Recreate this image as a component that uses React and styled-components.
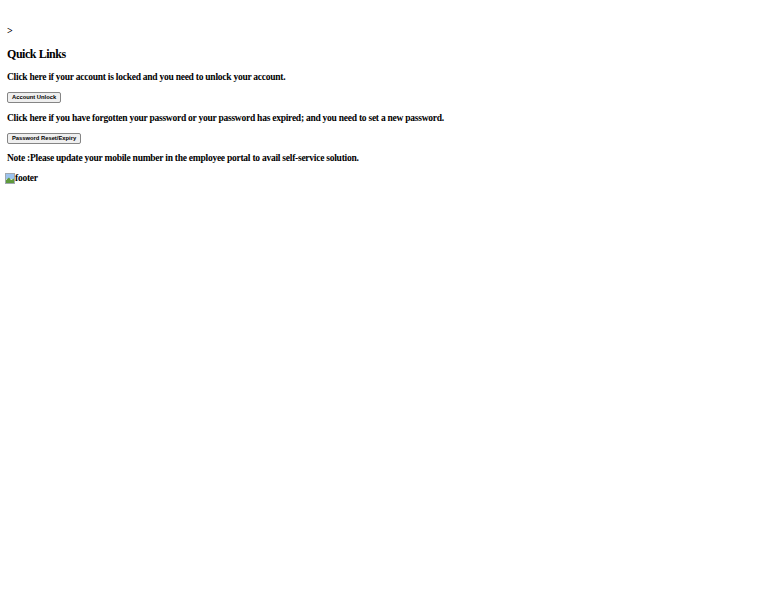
import React from 'react';
import styled, { createGlobalStyle } from 'styled-components';

const GlobalStyle = createGlobalStyle`
  html, body {
    margin: 0;
    padding: 0;
    background: #fff;
  }
  body {
    font-family: "Liberation Serif", "Times New Roman", serif;
    color: #000;
  }
`;

const Page = styled.div`
  padding: 24px 5px 0 5px;
  display: flex;
  flex-direction: column;
  align-items: flex-start;
`;

const Block = styled.div`
  padding-left: 2px;
  display: flex;
  flex-direction: column;
  align-items: flex-start;
`;

const Arrow = styled.div`
  font-size: 10px;
  line-height: 12px;
  margin-bottom: 11px;
  font-weight: bold;
  transform: translateY(1px);
`;

const Title = styled.h3`
  margin: 0 0 9px 0;
  font-size: 12px;
  line-height: 15px;
  font-weight: bold;
  letter-spacing: -0.45px;
`;

const Line = styled.p`
  margin: 0 0 ${p => p.$gap || 9}px 0;
  font-size: 9.5px;
  line-height: 12px;
  font-weight: bold;
  letter-spacing: -0.25px;
  white-space: nowrap;
`;

const Note = styled.span`
  font-weight: bold;
`;

const Button = styled.button`
  margin: 0 0 ${p => p.$gap || 9}px 0;
  height: 11px;
  padding: 0 4px;
  font-family: "Liberation Sans", Arial, sans-serif;
  font-size: 5.8px;
  font-weight: bold;
  line-height: 9px;
  color: #000;
  background: #efefef;
  border: 1px solid #858585;
  border-radius: 2px;
  cursor: pointer;
`;

const Broken = styled.div`
  display: flex;
  align-items: center;
  font-size: 9.5px;
  line-height: 12px;
  font-weight: bold;
  letter-spacing: -0.25px;
`;

const BrokenIcon = () => (
  <svg width="10" height="11" viewBox="0 0 10 11">
    <rect x="0.5" y="0.5" width="9" height="10" fill="#fff" stroke="#a0a8b0" />
    <rect x="1" y="1" width="8" height="5" fill="#9cc3ee" />
    <path d="M1 10 L1 7 L4 4.5 L6 7 L9 5.5 L9 10 Z" fill="#5f9a3c" />
  </svg>
);

export default function App() {
  return (
    <>
      <GlobalStyle />
      <Page>
        <Block>
          <Arrow>&gt;</Arrow>
          <Title>Quick Links</Title>
          <Line>Click here if your account is locked and you need to unlock your account.</Line>
          <Button>Account Unlock</Button>
          <Line>Click here if you have forgotten your password or your password has expired; and you need to set a new password.</Line>
          <Button $gap={8}>Password Reset/Expiry</Button>
          <Line $gap={8}>
            <Note>Note :</Note>Please update your mobile number in the employee portal to avail self-service solution.
          </Line>
        </Block>
        <Broken>
          <BrokenIcon />
          footer
        </Broken>
      </Page>
    </>
  );
}
